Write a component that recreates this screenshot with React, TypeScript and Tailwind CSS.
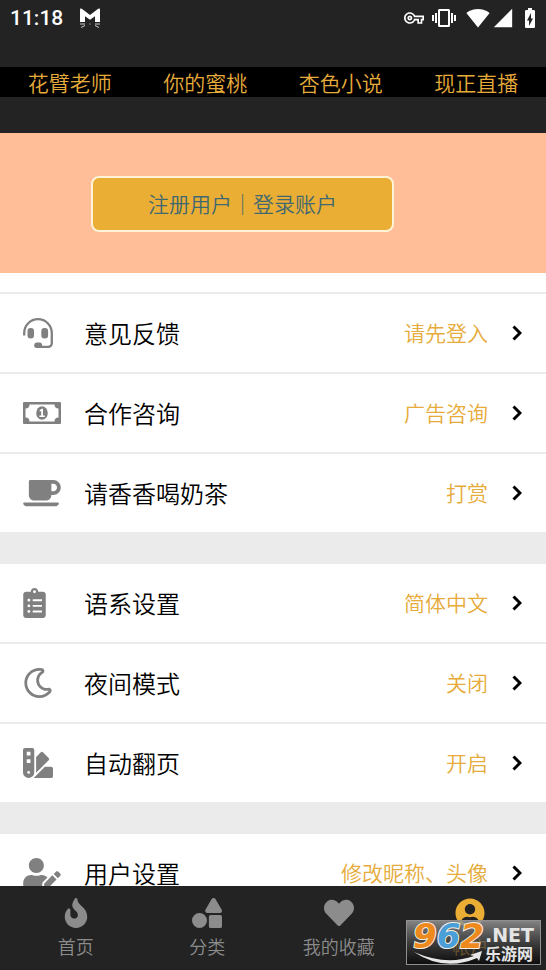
import { ReactNode, useState } from 'react';
import {
  FaClipboardList,
  FaCoffee,
  FaFire,
  FaHeart,
  FaRegMoon,
  FaShapes,
  FaSwatchbook,
  FaUserCircle,
  FaUserEdit,
} from 'react-icons/fa';
import {
  MdBatteryChargingFull,
  MdOutlineVpnKey,
  MdSignalCellular4Bar,
  MdSignalWifi4Bar,
  MdVibration,
} from 'react-icons/md';

interface MenuItem {
  icon: ReactNode;
  label: string;
  value: string;
}

// The glyphs share one height, their widths follow their own proportions
const iconClass = 'h-[30px] w-[30px]';
const wideIconClass = 'h-[30px] w-[38px]';
const narrowIconClass = 'h-[30px] w-[23px]';

function HeadsetIcon() {
  return (
    <svg viewBox="0 0 30 30" className={iconClass} aria-hidden="true">
      <path
        d="M1.200 17.500v-2.500a13.800 13.800 0 0 1 27.600 0v10.200a3.800 3.800 0 0 1-3.800 3.800H14"
        fill="none"
        stroke="currentColor"
        strokeWidth="2.300"
      />
      <rect x="4.500" y="10" width="6.500" height="10.600" rx="3" fill="currentColor" />
      <rect x="18.300" y="10" width="6.800" height="10.600" rx="3" fill="currentColor" />
      <rect x="11.200" y="24.600" width="8" height="5.500" rx="2.700" fill="currentColor" />
    </svg>
  );
}

function MoneyIcon() {
  return (
    <svg viewBox="0 0 38 30" className={wideIconClass} aria-hidden="true">
      <path
        fill="currentColor"
        fillRule="evenodd"
        d="M1 4h36a1 1 0 0 1 1 1v20a1 1 0 0 1-1 1H1a1 1 0 0 1-1-1V5a1 1 0 0 1 1-1ZM6.500 6.500a4 4 0 0 1-4 4v9a4 4 0 0 1 4 4h25a4 4 0 0 1 4-4v-9a4 4 0 0 1-4-4Z"
      />
      <ellipse cx="19" cy="15" rx="5.800" ry="6.800" fill="currentColor" />
      <path d="M16.500 12.300 18.800 10.800H20v6.600h1.800V19h-5.400v-1.600h1.800v-4.500l-1.300.7Z" fill="#fff" />
    </svg>
  );
}

function ChevronIcon() {
  return (
    <svg viewBox="0 0 10 16" className="h-4 w-2.5" fill="none" aria-hidden="true">
      <path d="M1.500 1.500 8 8l-6.500 6.500" stroke="#000" strokeWidth="3" />
    </svg>
  );
}

const quickLinks = ['花臂老师', '你的蜜桃', '杏色小说', '现正直播'];

const sections: MenuItem[][] = [
  [
    { icon: <HeadsetIcon />, label: '意见反馈', value: '请先登入' },
    { icon: <MoneyIcon />, label: '合作咨询', value: '广告咨询' },
    { icon: <FaCoffee className={wideIconClass} />, label: '请香香喝奶茶', value: '打赏' },
  ],
  [
    { icon: <FaClipboardList className={narrowIconClass} />, label: '语系设置', value: '简体中文' },
    { icon: <FaRegMoon className={iconClass} />, label: '夜间模式', value: '关闭' },
    { icon: <FaSwatchbook className={iconClass} />, label: '自动翻页', value: '开启' },
  ],
  [{ icon: <FaUserEdit className={wideIconClass} />, label: '用户设置', value: '修改昵称、头像' }],
];

const tabs = [
  { id: 'home', label: '首页', icon: <FaFire className={iconClass} /> },
  { id: 'category', label: '分类', icon: <FaShapes className={iconClass} /> },
  { id: 'favorites', label: '我的收藏', icon: <FaHeart className={iconClass} /> },
  { id: 'account', label: '帐户', icon: <FaUserCircle className={iconClass} /> },
];

function StatusBar() {
  return (
    <div className="flex h-9 items-center justify-between pl-2.5 pr-1 text-white">
      <div className="flex items-center gap-4">
        <span className="font-[Roboto,sans-serif] text-[21px] font-medium leading-9">11:18</span>
        <svg viewBox="0 0 22 20" className="h-5 w-[22px]" aria-hidden="true">
          <path d="M1 14V1.500Q1-.3 2.800.8L11 7 19.200.8Q21-.3 21 1.500V14h-5V8.200l-5 3.600-5-3.600V14Z" fill="#fff" />
          <path d="M1 16h5M16 16h5M6 17.500l-4 2M16 17.500l4 2M10.500 16h1" stroke="#ccc" strokeWidth="1" fill="none" />
        </svg>
      </div>
      <div className="flex items-center">
        <MdOutlineVpnKey className="mr-2 size-5" />
        <MdVibration className="mr-2.5 size-6" />
        <MdSignalWifi4Bar className="mr-0.5 size-6" />
        <MdSignalCellular4Bar className="mr-1 size-[22px]" />
        <MdBatteryChargingFull className="size-6" />
      </div>
    </div>
  );
}

function MenuRow({ item }: { item: MenuItem }) {
  return (
    <li>
      <button type="button" className="flex h-[78px] w-full items-center pl-[23px] pr-6 text-left">
        <span className="w-[61px] text-[#808080]">{item.icon}</span>
        <span className="flex-1 text-2xl text-black">{item.label}</span>
        <span className="mr-6 text-[21px] text-[#e6ab3a]">{item.value}</span>
        <ChevronIcon />
      </button>
    </li>
  );
}

function SiteBadge() {
  return (
    <div className="pointer-events-none absolute bottom-[5px] right-[5px] h-[45px] w-[135px]">
      <svg viewBox="0 0 135 45" className="h-full w-full overflow-visible" aria-label="962.NET 乐游网">
        <defs>
          <linearGradient id="badge" x1="0" y1="0" x2="0" y2="1">
            <stop offset="0" stopColor="#969696" stopOpacity="0.85" />
            <stop offset="0.5" stopColor="#484848" stopOpacity="0.75" />
            <stop offset="1" stopColor="#000" stopOpacity="0.6" />
          </linearGradient>
        </defs>
        <rect x="0.5" y="0.5" width="134" height="44" fill="url(#badge)" stroke="#909090" />
        <path d="M8 32Q40 46 68 36l-4-1 12-4-3 10-2-3Q38 52 8 32Z" fill="#e8e8e8" />
        <g
          fontFamily="DejaVu Sans"
          fontSize="34"
          fontWeight="700"
          fontStyle="italic"
          stroke="#f5eee4"
          strokeWidth="2"
          paintOrder="stroke"
        >
          <text x="7" y="28">
            <tspan fill="#ee8a1d">9</tspan>
            <tspan fill="#4a9fd8">6</tspan>
            <tspan fill="#ee8a1d">2</tspan>
          </text>
        </g>
        <text x="79" y="22" fill="#e4e4e4" fontFamily="DejaVu Sans" fontSize="19" fontWeight="700">
          .NET
        </text>
        <text x="79" y="40" fill="#e4e4e4" fontFamily="Noto Sans CJK SC" fontSize="16" fontWeight="700">
          乐游网
        </text>
      </svg>
    </div>
  );
}

export default function App() {
  const [activeTab, setActiveTab] = useState('account');

  return (
    <div className="relative flex h-screen flex-col bg-white font-['Noto_Sans_CJK_SC',sans-serif] font-[350]">
      <header className="bg-[#232323] pb-9">
        <StatusBar />
        <nav className="mt-[31px] flex h-[30px] items-center justify-around bg-black px-0.5">
          {quickLinks.map((link) => (
            <a key={link} href="#" className="text-[21px] leading-7 text-[#e6ab3a]">
              {link}
            </a>
          ))}
        </nav>
      </header>

      <main className="min-h-0 flex-1 overflow-y-auto [scrollbar-width:none]">
        <div className="bg-[#ffbe98] pb-[41px] pl-[91px] pr-[152px] pt-[43px]">
          <button
            type="button"
            className="h-14 w-full rounded-lg border-2 border-[#fff3d8] bg-[#ebae34] text-[21px] text-[#3f6870]"
          >
            注册用户｜登录账户
          </button>
        </div>

        <div className="mt-[19px] border-t-2 border-[#ebebeb]">
          {sections.map((items, index) => (
            <section key={index} className={index > 0 ? 'border-t-[32px] border-[#ebebeb]' : ''}>
              <ul className="divide-y-2 divide-[#ebebeb]">
                {items.map((item) => (
                  <MenuRow key={item.label} item={item} />
                ))}
              </ul>
            </section>
          ))}
        </div>
      </main>

      <nav className="flex h-[84px] shrink-0 bg-[#232323] px-2.5">
        {tabs.map((tab) => (
          <button
            key={tab.id}
            type="button"
            onClick={() => setActiveTab(tab.id)}
            className={`flex flex-1 flex-col items-center pt-3 ${
              activeTab === tab.id ? 'text-[#ebae34]' : 'text-[#8c8c8c]'
            }`}
          >
            {tab.icon}
            <span className="mt-1 text-lg">{tab.label}</span>
          </button>
        ))}
      </nav>

      <SiteBadge />
    </div>
  );
}
